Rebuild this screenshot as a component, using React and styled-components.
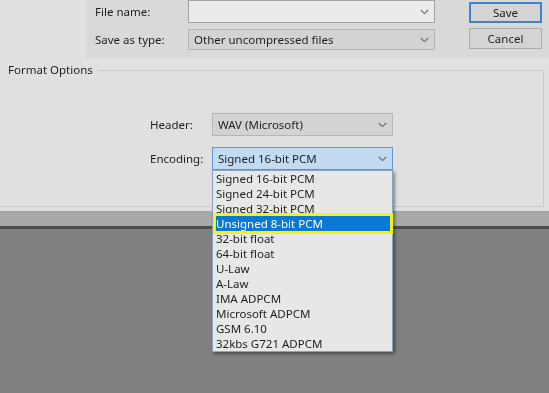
import React from "react";
import styled, { createGlobalStyle } from "styled-components";

const Global = createGlobalStyle`
  html, body { margin: 0; padding: 0; background: #808080; }
  body { font-family: "Noto Sans", "Open Sans", sans-serif; font-size: 11.5px; color: #1e1e1e; }
  * { box-sizing: border-box; }
`;

const Page = styled.div`
  width: 549px;
  height: 393px;
  display: flex;
  flex-direction: column;
  background: #808080;
  overflow: hidden;
  filter: blur(0.5px);
`;

const Dialog = styled.div`
  height: 212px;
  flex: none;
  display: flex;
  flex-direction: column;
  background: #e0e0e0;
  border-bottom: 1px solid #8ea4bc;
`;

const TopPanel = styled.div`
  height: 58px;
  margin-left: 86px;
  padding: 0 7px 0 9px;
  display: flex;
  background: #d9d9d9;
`;

const FileGrid = styled.div`
  display: grid;
  grid-template-columns: 93px 247px;
  grid-template-rows: 23px 21px;
  row-gap: 6px;
  align-items: center;
`;

const Label = styled.span`
  white-space: nowrap;
  line-height: 16px;
`;

const Field = styled.div`
  height: 100%;
  display: flex;
  align-items: center;
  justify-content: space-between;
  padding: 0 5px 0 5px;
  border: 1px solid ${(p) => p.$border || "#a9a9a9"};
  background: ${(p) => p.$bg || "#ececec"};
  white-space: nowrap;
`;

const Chevron = () => (
  <svg width="9" height="6" viewBox="0 0 9 6" style={{ flex: "none" }}>
    <path d="M0.8 1 L4.5 4.6 L8.2 1" fill="none" stroke="#6a6a6a" strokeWidth="1.1" />
  </svg>
);

const Buttons = styled.div`
  margin-left: 34px;
  padding-top: 2px;
  display: flex;
  flex-direction: column;
  gap: 5px;
`;

const Button = styled.div`
  width: 73px;
  height: 21px;
  display: flex;
  align-items: center;
  justify-content: center;
  background: #d4d4d4;
  border: ${(p) => (p.$default ? "2px solid #3f82d0" : "1px solid #adadad")};
`;

const Group = styled.fieldset`
  margin: 4px 5px 0 0;
  padding: 35px 0 36px 0;
  border: 1px solid #cacaca;
  border-left: none;
  min-width: 0;
`;

const Legend = styled.legend`
  padding: 0 4px 0 8px;
  line-height: 16px;
  background: #e0e0e0;
`;

const Rows = styled.div`
  margin-left: 150px;
  display: grid;
  grid-template-columns: 62px 181px;
  grid-auto-rows: 23px;
  row-gap: 11px;
  align-items: center;
`;

const ComboWrap = styled.div`
  position: relative;
  height: 23px;
`;

const List = styled.div`
  position: absolute;
  top: 100%;
  left: 0;
  width: 181px;
  padding: 0;
  background: #e7e7e7;
  border: 1px solid #8aa3c2;
  box-shadow: 2px 2px 3px rgba(0, 0, 0, 0.4);
  z-index: 2;
`;

const Item = styled.div`
  position: relative;
  height: 15px;
  line-height: 15px;
  padding-left: 3px;
  white-space: nowrap;
  background: ${(p) => (p.$active ? "#0a78d6" : "transparent")};
  color: ${(p) => (p.$active ? "#ffffff" : "#1e1e1e")};

  ${(p) =>
    p.$active &&
    `
    &::after {
      content: "";
      position: absolute;
      inset: -3px -1px -3px 0;
      border: 3px solid #f4f40c;
    }
  `}
`;

const Strip = styled.div`
  height: 17px;
  flex: none;
  background: #a8a8a8;
  border-bottom: 3px solid #4e4e4e;
`;

const Desk = styled.div`
  flex: 1;
  background: #808080;
`;

const encodings = [
  "Signed 16-bit PCM",
  "Signed 24-bit PCM",
  "Signed 32-bit PCM",
  "Unsigned 8-bit PCM",
  "32-bit float",
  "64-bit float",
  "U-Law",
  "A-Law",
  "IMA ADPCM",
  "Microsoft ADPCM",
  "GSM 6.10",
  "32kbs G721 ADPCM",
];

export default function App() {
  return (
    <>
      <Global />
      <Page>
        <Dialog>
          <TopPanel>
            <FileGrid>
              <Label>File name:</Label>
              <Field $bg="#ebebeb" $border="#a2a2a2">
                <span />
                <Chevron />
              </Field>
              <Label>Save as type:</Label>
              <Field $bg="#d3d3d3" $border="#b4b4b4">
                <span>Other uncompressed files</span>
                <Chevron />
              </Field>
            </FileGrid>
            <Buttons>
              <Button $default>Save</Button>
              <Button>Cancel</Button>
            </Buttons>
          </TopPanel>
          <Group>
            <Legend>Format Options</Legend>
            <Rows>
              <Label>Header:</Label>
              <ComboWrap>
                <Field $bg="#d3d3d3" $border="#b6b6b6">
                  <span>WAV (Microsoft)</span>
                  <Chevron />
                </Field>
              </ComboWrap>
              <Label>Encoding:</Label>
              <ComboWrap>
                <Field $bg="#c3dbf0" $border="#5e9ad6">
                  <span>Signed 16-bit PCM</span>
                  <Chevron />
                </Field>
                <List>
                  {encodings.map((e) => (
                    <Item key={e} $active={e === "Unsigned 8-bit PCM"}>
                      {e}
                    </Item>
                  ))}
                </List>
              </ComboWrap>
            </Rows>
          </Group>
        </Dialog>
        <Strip />
        <Desk />
      </Page>
    </>
  );
}
